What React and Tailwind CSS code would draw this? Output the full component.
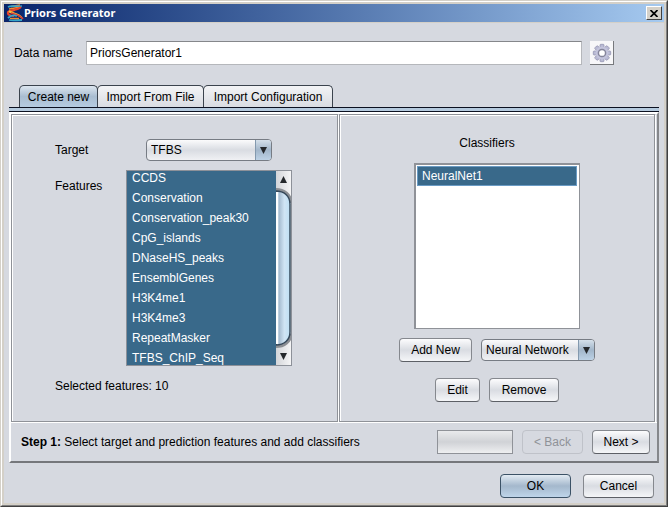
import { useState } from "react";

const FEATURES = [
  "CCDS",
  "Conservation",
  "Conservation_peak30",
  "CpG_islands",
  "DNaseHS_peaks",
  "EnsemblGenes",
  "H3K4me1",
  "H3K4me3",
  "RepeatMasker",
  "TFBS_ChIP_Seq",
];

const TABS = [
  { title: "Create new", width: "w-[79px]" },
  { title: "Import From File", width: "w-[107px]" },
  { title: "Import Configuration", width: "w-[130px]" },
];

const TEETH = [0, 45, 90, 135, 180, 225, 270, 315];

const HelixIcon = () => (
  <svg width="18" height="18" viewBox="0 0 18 18" fill="none" aria-hidden="true">
    <path d="M5 2.500 14 1M3 5l12-2M3 8l6-2" stroke="#f0892f" strokeWidth="1.600" />
    <path d="M2 3c3-2 7 0 14-1" stroke="#35a5c9" strokeWidth="1.600" />
    <path d="M15 3C11 7 4 5 2 8c-1 3 3 4 6 4" stroke="#e8452c" strokeWidth="2" />
    <path d="M3 7c3 3 9 2 13 7" stroke="#f5c13a" strokeWidth="1.800" />
    <path d="M5 9c4 1 9 2 12 6" stroke="#d93a35" strokeWidth="1.600" />
    <path d="M2 14c3-3 6-3 9-2M3 16c4 1 8 0 13 0" stroke="#35a5c9" strokeWidth="1.800" />
    <path d="M4 14.500h9" stroke="#f0892f" strokeWidth="1.400" />
  </svg>
);

const GearIcon = () => (
  <svg width="20" height="20" viewBox="0 0 20 20" aria-hidden="true">
    <g fill="#b9bad4" stroke="#8d8eac" strokeWidth="0.700">
      {TEETH.map((angle) => (
        <rect key={angle} x="8" y="1.300" width="4" height="4" rx="0.800" transform={`rotate(${angle} 10 10)`} />
      ))}
    </g>
    <circle cx="10" cy="10" r="6.500" fill="#c3c4dc" />
    <circle cx="10" cy="10" r="3.600" fill="#fff" stroke="#85859b" strokeWidth="1.500" />
  </svg>
);

const Arrow = ({ up }) => (
  <svg width="7" height="7" viewBox="0 0 7 7" aria-hidden="true">
    <path d={up ? "M3.500 0 7 7H0z" : "M0 0h7L3.500 7z"} fill="#25282c" />
  </svg>
);

const Button = ({ children, className = "", primary, ...rest }) => (
  <button
    type="button"
    className={`h-6 rounded border text-center whitespace-nowrap disabled:border-[#bfc2c9] disabled:bg-none disabled:text-[#8f9298] ${
      primary
        ? "border-[#3c5266] bg-linear-to-b from-[#e3ebf3] via-[#a4b8cc] to-[#bfd5ea]"
        : "border-[#85888e] border-b-[#5d6066] bg-linear-to-b from-[#fcfcfd] via-[#d9dce2] to-[#f5f6f8]"
    } ${className}`}
    {...rest}
  >
    {children}
  </button>
);

const Dropdown = ({ id, label, options, className = "" }) => (
  <div
    className={`relative h-[22px] overflow-hidden rounded border border-[#777c84] bg-linear-to-b from-[#fbfbfc] via-[#d9dce2] to-[#f0f1f4] ${className}`}
  >
    <select
      id={id}
      aria-label={label}
      className="h-full w-full appearance-none pr-4 pl-1 leading-5 outline-none"
    >
      {options.map((option) => (
        <option key={option}>{option}</option>
      ))}
    </select>
    <span className="pointer-events-none absolute inset-y-0 right-0 flex w-4 items-center justify-center border-l border-[#8399ae] bg-linear-to-b from-[#d5e0ea] via-[#a2b6ca] to-[#bdd2e6]">
      <Arrow />
    </span>
  </div>
);

const FeatureList = () => (
  <div className="flex h-[196px] w-[166px] border border-[#8d9199]">
    <ul
      role="listbox"
      aria-label="Features"
      aria-multiselectable="true"
      className="flex flex-1 flex-col justify-center overflow-hidden bg-[#39698a] text-white"
    >
      {FEATURES.map((name) => (
        <li key={name} role="option" aria-selected="true" className="h-5 shrink-0 pl-[5px] leading-5">
          {name}
        </li>
      ))}
    </ul>
    <div className="flex w-[15px] flex-col bg-linear-to-r from-[#d3d5d9] to-[#f5f5f6]">
      <button type="button" aria-label="Scroll up" className="flex h-[17px] items-center justify-center">
        <Arrow up />
      </button>
      <svg className="min-h-0 w-full flex-1" viewBox="0 0 15 160" preserveAspectRatio="none" aria-hidden="true">
        <defs>
          <linearGradient id="thumb">
            <stop offset="0" stopColor="#f2f7fb" />
            <stop offset="0.250" stopColor="#a9bfd3" />
            <stop offset="0.600" stopColor="#d0e4f4" />
            <stop offset="1" stopColor="#bfe0f5" />
          </linearGradient>
        </defs>
        <path d="M0 1.500C8 1.500 15 7 15 15M0 158.500c8 0 15-5 15-13" fill="none" stroke="#8b8e93" strokeWidth="3" />
        <path d="M0 3C8 3 14 8 14 16v128c0 8-6 13-14 13z" fill="url(#thumb)" stroke="#35485a" strokeWidth="1.500" />
        <path d="M1 4v152" stroke="#fff" strokeWidth="2" />
      </svg>
      <button type="button" aria-label="Scroll down" className="flex h-[17px] items-center justify-center">
        <Arrow />
      </button>
    </div>
  </div>
);

const App = () => {
  const [tab, setTab] = useState(TABS[0].title);
  const [name, setName] = useState("PriorsGenerator1");

  return (
    <div className="flex min-h-screen flex-col border border-[#d4d0c8] border-r-[#404040] border-b-[#404040] bg-[#d6d9e0] font-['Liberation_Sans',Arial,sans-serif] text-[12px] leading-4 text-black">
      <div className="flex flex-1 flex-col border border-white border-r-[#808080] border-b-[#808080]">
        <div className="flex flex-1 flex-col border-2 border-[#d4d0c8]">
          <header className="flex h-[18px] items-center bg-linear-to-r from-[#0a246a] to-[#a6caf0] px-0.5">
            <HelixIcon />
            <h1 className="flex-1 font-['Noto_Sans',sans-serif] text-[11px] leading-4 font-bold text-white">
              Priors Generator
            </h1>
            <button
              type="button"
              aria-label="Close"
              className="flex h-3.5 w-4 items-center justify-center border border-white border-r-[#404040] border-b-[#404040] bg-[#d4d0c8]"
            >
              <svg width="8" height="7" viewBox="0 0 8 7" aria-hidden="true">
                <path d="M.5 0 7.500 7M7.500 0 .5 7" stroke="#000" strokeWidth="1.700" />
              </svg>
            </button>
          </header>

          <div className="flex flex-1 flex-col border-t border-[#d4d0c8] px-[5px]">
            <div className="mt-[18px] flex items-center pr-[45px] pl-[5px]">
              <label htmlFor="data-name" className="w-[72px]">
                Data name
              </label>
              <input
                id="data-name"
                value={name}
                onChange={(e) => setName(e.target.value)}
                className="h-6 min-w-0 flex-1 border border-[#b5b7bb] border-t-[#85878b] bg-white px-[3px] outline-none"
              />
              <button
                type="button"
                aria-label="Settings"
                className="ml-2 flex size-6 items-center justify-center border-r border-b border-[#77797d] bg-[#f7f7f9]"
              >
                <GearIcon />
              </button>
            </div>

            <div role="tablist" className="mt-5 flex border-b border-[#0b1020] pl-[10px]">
              {TABS.map(({ title, width }) => (
                <button
                  key={title}
                  type="button"
                  role="tab"
                  aria-selected={title === tab}
                  onClick={() => setTab(title)}
                  className={`-mr-px h-[22px] rounded-t-[5px] border border-b-0 border-[#3b434d] whitespace-nowrap ${width} ${
                    title === tab
                      ? "bg-linear-to-b from-[#dde6ef] via-[#a9bdd1] to-[#b5cbe0]"
                      : "bg-linear-to-b from-[#f3f4f6] to-[#d9dce2]"
                  }`}
                >
                  {title}
                </button>
              ))}
            </div>
            <div className="h-1 border-b border-[#0b1020] bg-[#b5cade]" />

            <main className="border-2 border-white border-r-[#85878b] border-b-[#75777b]">
              <div className="grid h-[308px] grid-cols-[327fr_317fr] pr-0.5">
                <section className="border border-[#8f9298] pt-[24px] pl-[43px] shadow-[inset_1px_1px_0_#fff,1px_1px_0_#fff]">
                  <div className="flex items-center">
                    <label htmlFor="target" className="w-[91px]">
                      Target
                    </label>
                    <Dropdown id="target" options={["TFBS"]} className="w-[126px]" />
                  </div>
                  <div className="mt-[9px] flex">
                    <span className="mt-2 w-[71px]">Features</span>
                    <FeatureList />
                  </div>
                  <p className="mt-3">Selected features: {FEATURES.length}</p>
                </section>

                <section className="ml-px flex flex-col items-center border border-[#8f9298] pt-5 shadow-[inset_1px_1px_0_#fff,1px_1px_0_#fff]">
                  <h2 className="pr-5">Classifiers</h2>
                  <ul
                    role="listbox"
                    aria-label="Classifiers"
                    className="mt-3 h-[166px] w-[166px] border border-[#8f9298] bg-white pt-0.5 pr-0.5 pl-0.5 shadow-[inset_1px_1px_0_#8f9298]"
                  >
                    <li
                      role="option"
                      aria-selected="true"
                      className="h-5 border border-[#6a9bc4] bg-[#39698a] pl-1 leading-[18px] text-white"
                    >
                      NeuralNet1
                    </li>
                  </ul>
                  <div className="mt-[9px] flex items-center gap-[9px]">
                    <Button className="w-[73px]">Add New</Button>
                    <Dropdown label="Classifier type" options={["Neural Network"]} className="w-[114px]" />
                  </div>
                  <div className="mt-4 flex gap-[9px]">
                    <Button className="w-[45px]">Edit</Button>
                    <Button className="w-[70px]">Remove</Button>
                  </div>
                </section>
              </div>

              <div className="flex h-[39px] items-center gap-[9px] border-t border-white pr-[7px] pl-[10px]">
                <p className="flex-1">
                  <b>Step 1:</b> Select target and prediction features and add classifiers
                </p>
                <div
                  role="progressbar"
                  aria-label="Progress"
                  className="h-6 w-[76px] border border-[#8f9298] bg-linear-to-b from-[#e9eaec] via-[#d0d2d6] to-[#eeeff1]"
                />
                <Button className="w-[61px]" disabled>
                  &lt; Back
                </Button>
                <Button className="w-[58px]">Next &gt;</Button>
              </div>
            </main>

            <footer className="mt-[11px] flex justify-end gap-3 pr-[5px] pb-1">
              <Button className="w-[71px]" primary>
                OK
              </Button>
              <Button className="w-[71px]">Cancel</Button>
            </footer>
          </div>
        </div>
      </div>
    </div>
  );
};

export default App;
